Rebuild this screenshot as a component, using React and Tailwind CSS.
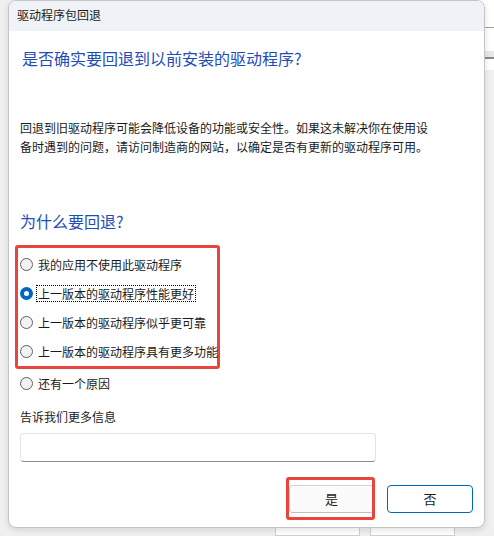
import { useState } from 'react';

const FONT = { fontFamily: '"Noto Sans CJK SC", "Microsoft YaHei", "Noto Sans", sans-serif' };

const REASONS = [
  '我的应用不使用此驱动程序',
  '上一版本的驱动程序性能更好',
  '上一版本的驱动程序似乎更可靠',
  '上一版本的驱动程序具有更多功能',
];

function Radio({ label, checked, focused, onSelect }) {
  return (
    <label className="flex h-[29px] cursor-default items-center gap-[3px] whitespace-nowrap" onClick={onSelect}>
      {checked ? (
        <span className="flex h-[13px] w-[13px] flex-none items-center justify-center rounded-full bg-[#0067c0]">
          <span className="h-[5px] w-[5px] rounded-full bg-white" />
        </span>
      ) : (
        <span className="h-[13px] w-[13px] flex-none rounded-full border border-[#5f5f5f] bg-[#f3f3f3]" />
      )}
      <span
        className={`px-[1px] text-[12px] leading-[15px] text-[#1a1a1a] ${
          focused ? 'border border-dotted border-black' : 'border border-transparent'
        }`}
      >
        {label}
      </span>
    </label>
  );
}

export default function App() {
  const [reason, setReason] = useState(1);

  return (
    <div className="relative h-[536px] w-[494px] overflow-hidden bg-[#f0f0f0]" style={FONT}>
      {/* window behind the dialog */}
      <div className="absolute right-0 top-0 flex h-[70px] w-[20px] flex-col bg-white">
        <div className="h-[28px] border-b border-[#a0a0a0]" />
        <div className="mt-[23px] h-[8px] border-b-2 border-[#8a8a8a] bg-[#e8e8e8]" />
      </div>
      <div className="absolute left-[275px] top-[527px] flex gap-[10px]">
        <div className="h-[9px] w-[85px] overflow-hidden border border-[#cfcfcf] bg-white" />
        <div className="h-[9px] w-[85px] overflow-hidden border border-[#cfcfcf] bg-white" />
      </div>

      {/* dialog */}
      <div className="absolute left-[8px] top-0 flex h-[528px] w-[477px] flex-col overflow-hidden rounded-[8px] border border-[#c4c4c4] bg-white shadow-[0_2px_6px_rgba(0,0,0,0.12)]">
        <div className="flex h-[30px] flex-none items-center bg-[#eff3f7] pb-[2px] pl-[8px] text-[12px] text-[#1a1a1a]">
          驱动程序包回退
        </div>

        <div className="flex flex-col px-[11px]">
          <h1 className="mt-[16px] pl-[2px] text-[16px] font-normal leading-[22px] text-[#1f4db8]">
            是否确实要回退到以前安装的驱动程序?
          </h1>

          <p className="mt-[49px] w-[410px] text-[12px] leading-[19px] text-[#1a1a1a]">
            回退到旧驱动程序可能会降低设备的功能或安全性。如果这未解决你在使用设备时遇到的问题，请访问制造商的网站，以确定是否有更新的驱动程序可用。
          </p>

          <h2 className="mt-[54px] text-[16px] font-normal leading-[22px] text-[#1f4db8]">为什么要回退?</h2>

          <div className="-ml-[5px] mt-[13px] w-[205px] rounded-[3px] border-[3px] border-[#e8453c] pl-[2px] pt-[2px]">
            {REASONS.map((r, i) => (
              <Radio key={r} label={r} checked={reason === i} focused={reason === i} onSelect={() => setReason(i)} />
            ))}
          </div>
          <Radio label="还有一个原因" checked={reason === 4} focused={reason === 4} onSelect={() => setReason(4)} />

          <div className="mt-[10px] text-[12px] leading-[18px] text-[#1a1a1a]">告诉我们更多信息</div>
          <input
            className="mt-[7px] h-[29px] w-[356px] rounded-[4px] border border-[#e3e3e3] border-b-[#8c8c8c] bg-white px-[6px] text-[12px] outline-none"
            type="text"
          />

          <div className="mt-[23px] flex justify-end gap-[13px]">
            <div className="relative">
              <button className="h-[28px] w-[85px] rounded-[4px] border border-[#d3d3d3] border-b-[#bdbdbd] bg-[#fbfbfb] text-[13px] text-[#1a1a1a]">
                是
              </button>
              <span className="pointer-events-none absolute -bottom-[7px] -left-[3px] -right-[1px] -top-[8px] rounded-[3px] border-[3px] border-[#e8453c]" />
            </div>
            <button className="h-[28px] w-[86px] rounded-[4px] border-[1.5px] border-[#0067c0] bg-white text-[13px] text-[#1a1a1a]">
              否
            </button>
          </div>
        </div>
      </div>
    </div>
  );
}
